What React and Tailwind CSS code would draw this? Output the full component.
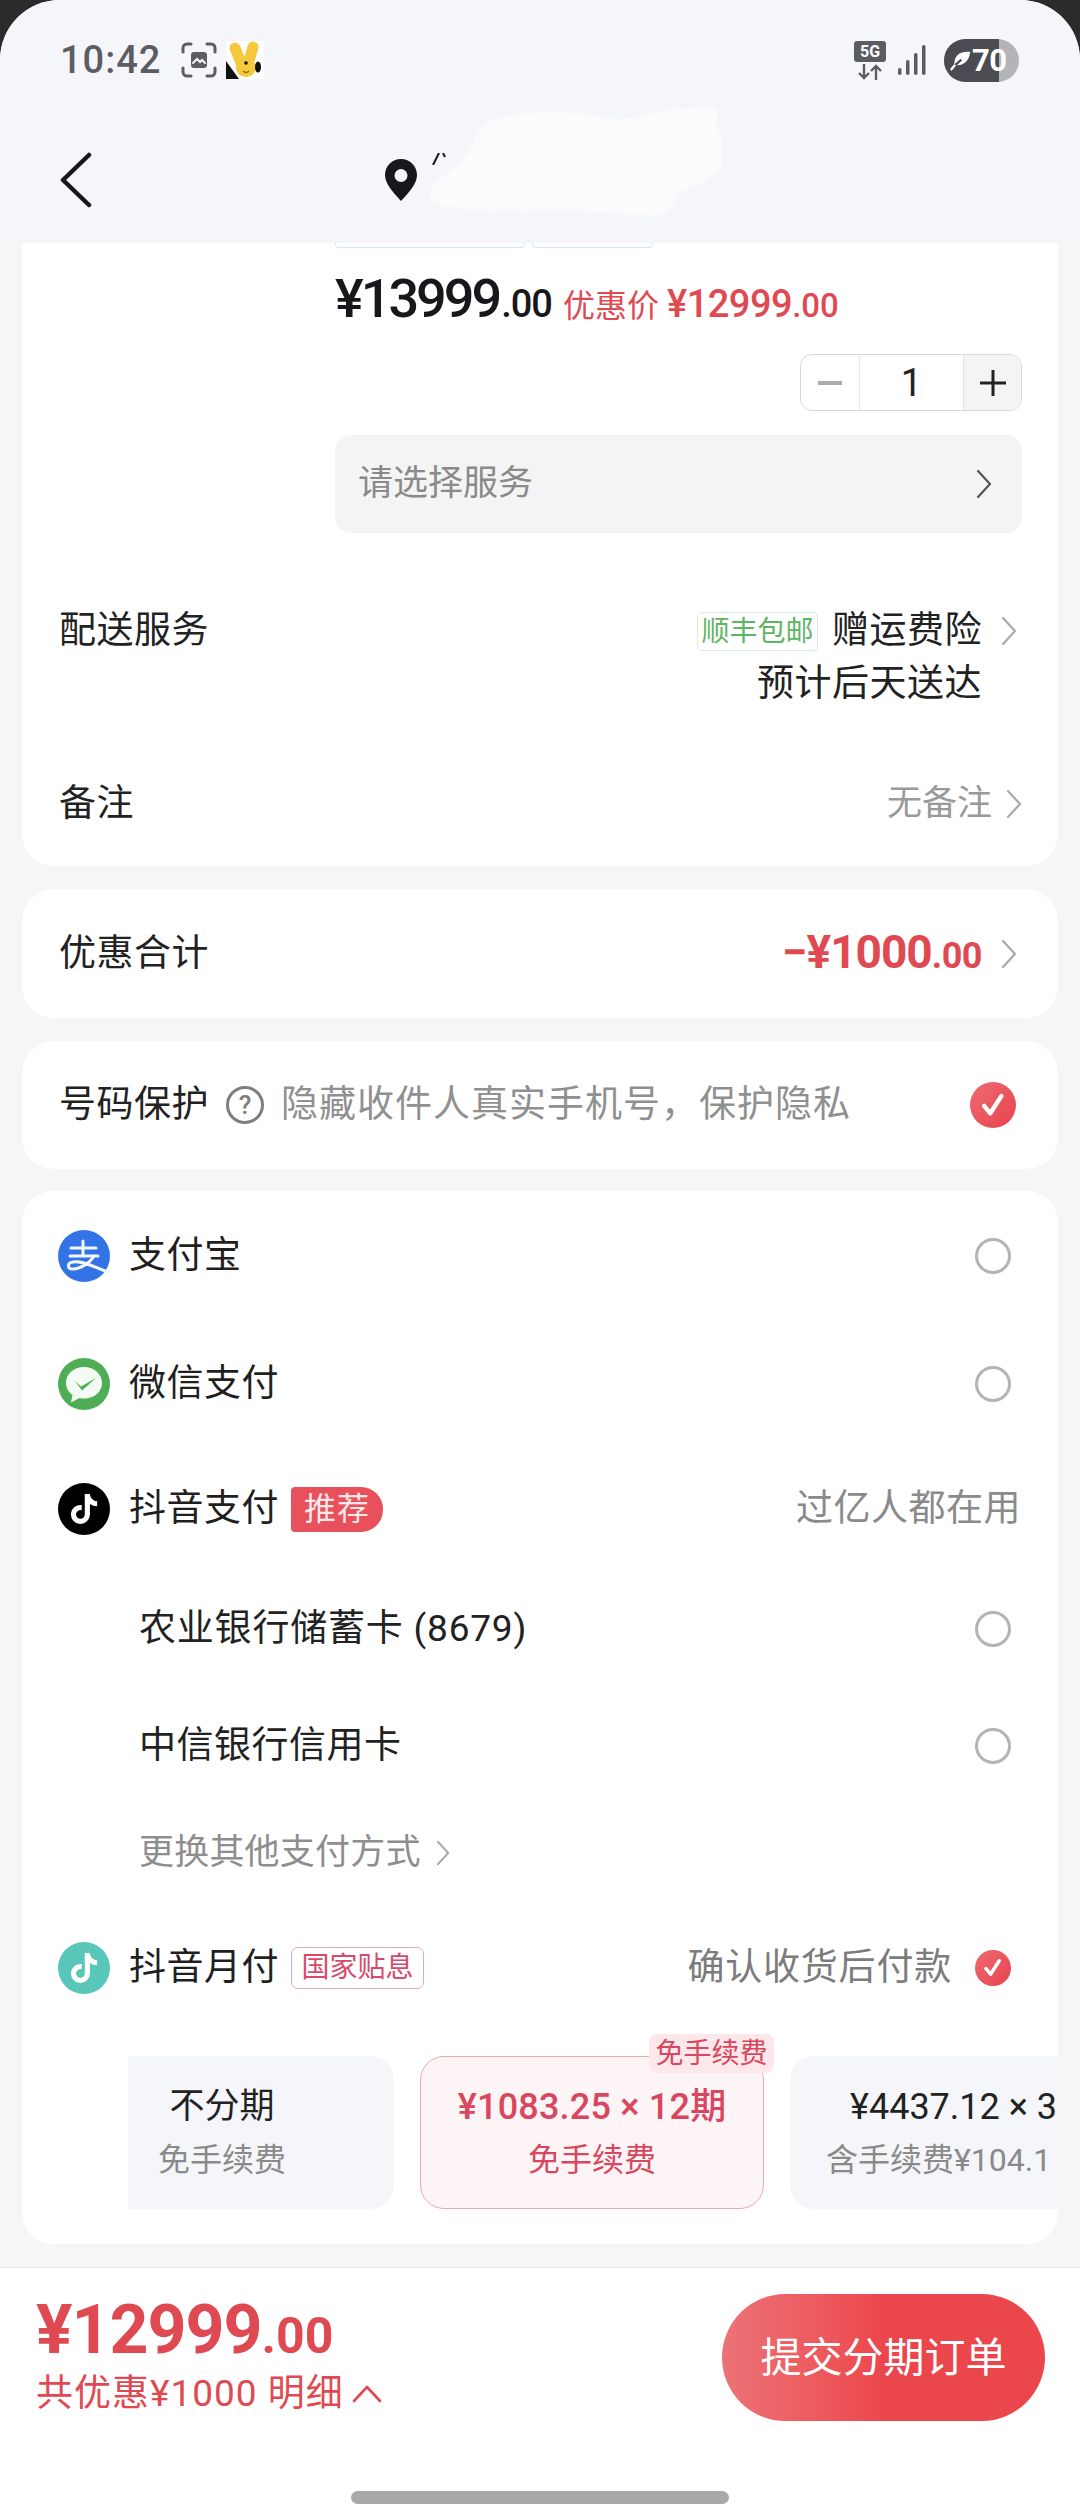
import React from "react";
import { FaTiktok } from "react-icons/fa";

function Chevron({ className = "" }) {
  return (
    <svg viewBox="0 0 16 30" className={`w-[16px] h-[30px] shrink-0 ${className}`} fill="none" stroke="currentColor" strokeWidth="2.2" strokeLinecap="round" strokeLinejoin="round">
      <path d="M2 2l12 13L2 28" />
    </svg>
  );
}

function Radio() {
  return <div className="w-[36px] h-[36px] rounded-full border-[3px] border-[#b4b4b4] shrink-0" />;
}

function Check({ size = "w-[36px] h-[36px]" }) {
  return (
    <div className={`${size} rounded-full bg-gradient-to-br from-[#ee6a70] to-[#e8404e] flex items-center justify-center shrink-0`}>
      <svg viewBox="0 0 24 24" className="w-[64%] h-[64%]" fill="none" stroke="#fff" strokeWidth="3.6" strokeLinecap="round" strokeLinejoin="round">
        <path d="M5 13l5 6 9-14" />
      </svg>
    </div>
  );
}

function AlipayIcon() {
  return (
    <svg viewBox="0 0 52 52" className="w-[52px] h-[52px] shrink-0">
      <circle cx="26" cy="26" r="26" fill="#3274e8" />
      <g fill="none" stroke="#f4f7ff" strokeWidth="3" strokeLinecap="round">
        <path d="M13 18h25M25 11v14M12 26h28" />
        <path d="M36 26C32 33 22 39 15 39 9 39 9 33 15 32c9-2 23 6 35 10" />
      </g>
    </svg>
  );
}

function WechatIcon() {
  return (
    <svg viewBox="0 0 52 52" className="w-[52px] h-[52px] shrink-0">
      <circle cx="26" cy="26" r="26" fill="#4fae55" />
      <path d="M26 9C15.500 9 8 16 8 25c0 5 2.600 9.200 6.500 12L13 44.500l8.500-4.500c1.500.4 3 .6 4.500.6 10.500 0 18-7 18-15.600S36.500 9 26 9z" fill="#f4fbf4" />
      <path d="M17 23l6 5.500L38 20 24 32.500z" fill="#4fae55" />
    </svg>
  );
}

function TiktokIcon({ bg }) {
  return (
    <div className={`w-[52px] h-[52px] rounded-full ${bg} flex items-center justify-center shrink-0 text-white text-[30px]`}>
      <FaTiktok />
    </div>
  );
}

function PayRow({ icon, label, children, className = "" }) {
  return (
    <div className={`flex items-center h-[52px] pl-[36px] ${className}`}>
      {icon}
      <span className="ml-[19px] text-[#1f1f1f] tracking-[0.5px]">{label}</span>
      {children}
    </div>
  );
}

function StatusBar() {
  return (
    <div className="flex items-center h-[120px] pl-[60px] pr-[61px] text-[#5b5d63]">
      <span className="text-[38px] font-medium leading-none tracking-[1px]">10:42</span>
      {/* screenshot indicator */}
      <svg viewBox="0 0 36 36" className="w-[36px] h-[36px] ml-[20px]" fill="none" stroke="#5b5d63" strokeWidth="3" strokeLinecap="round">
        <path d="M2 10V6a4 4 0 014-4h4M26 2h4a4 4 0 014 4v4M34 26v4a4 4 0 01-4 4h-4M10 34H6a4 4 0 01-4-4v-4" />
        <rect x="10" y="10" width="16" height="16" rx="3" fill="#5b5d63" stroke="none" />
        <path d="M12 21l4-4 3 3 2-2 3 3" stroke="#f5f6fa" strokeWidth="2" />
      </svg>
      {/* bunny app icon */}
      <svg viewBox="0 0 38 38" className="w-[38px] h-[38px] ml-[9px]">
        <rect width="38" height="38" fill="#fff" />
        <path d="M9 7l8 20M27 6l-6 21" fill="none" stroke="#f5c93c" strokeWidth="11" strokeLinecap="round" />
        <ellipse cx="20" cy="27" rx="10" ry="9" fill="#f5c93c" />
        <path d="M0 20l13 18H0z" fill="#111" />
        <ellipse cx="32" cy="26" rx="3" ry="5.500" fill="#111" />
        <circle cx="20" cy="22" r="1.800" fill="#111" />
        <path d="M17 30c2 2 4 2 6 0" fill="none" stroke="#8a6a10" strokeWidth="1.200" />
      </svg>
      <div className="flex-1" />
      {/* 5G */}
      <div className="flex flex-col items-center w-[32px] mr-[12px]">
        <div className="w-[32px] h-[21px] bg-[#5b5d63] rounded-[3px] text-white text-[16px] font-bold leading-[21px] text-center">5G</div>
        <svg viewBox="0 0 28 16" className="w-[28px] h-[16px] mt-[2px]" fill="none" stroke="#5b5d63" strokeWidth="2.400">
          <path d="M8 0v14M3 9l5 5 5-5M20 16V2M15 7l5-5 5 5" />
        </svg>
      </div>
      {/* signal */}
      <svg viewBox="0 0 28 30" className="w-[28px] h-[30px] mr-[18px]" fill="#5b5d63">
        <rect x="0" y="23" width="3.500" height="7" rx="1.700" />
        <rect x="8" y="15" width="3.500" height="15" rx="1.700" />
        <rect x="16" y="8" width="3.500" height="22" rx="1.700" />
        <rect x="24" y="0" width="3.500" height="30" rx="1.700" />
      </svg>
      {/* battery */}
      <div className="relative w-[75px] h-[43px] rounded-full overflow-hidden bg-[#b3b4b8] shrink-0">
        <div className="w-[55px] h-full bg-[#4b4c52] flex items-center pl-[6px]">
          <svg viewBox="0 0 24 24" className="w-[21px] h-[21px] shrink-0">
            <path d="M23 2C12 1 4 6 5 17c8 2 17-3 18-15z" fill="#fff" />
            <path d="M1 23c4-5 7-8 12-12" fill="none" stroke="#4b4c52" strokeWidth="2.500" />
            <path d="M1 23c2-3 3-4 5-6" fill="none" stroke="#fff" strokeWidth="2.500" />
          </svg>
          <span className="ml-[1px] text-white text-[31px] font-bold leading-none tracking-[-0.5px]">70</span>
        </div>
      </div>
    </div>
  );
}

function Header() {
  return (
    <div className="bg-[#f5f6fa] h-[243px] rounded-t-[60px] shrink-0">
      <StatusBar />
      <div className="relative flex items-center h-[90px] pl-[60px] mt-[15px]">
        <svg viewBox="0 0 32 56" className="w-[32px] h-[56px]" fill="none" stroke="#17181c" strokeWidth="4.500" strokeLinecap="round" strokeLinejoin="round">
          <path d="M29 3L3 28l26 25" />
        </svg>
        <svg viewBox="0 0 32 42" className="w-[32px] h-[42px] ml-[293px]">
          <path fillRule="evenodd" d="M16 0C7 0 0 7 0 16c0 9 8 17 16 26 8-9 16-17 16-26C32 7 25 0 16 0zm0 10a6.500 6.500 0 110 13 6.500 6.500 0 010-13z" fill="#17181c" />
        </svg>
        <div className="w-[250px] h-[3px] ml-[12px] relative">
          <svg viewBox="0 0 30 12" className="absolute left-[0px] top-[-26px] w-[30px] h-[12px]" fill="none" stroke="#17181c" strokeWidth="2">
            <path d="M4 12L10 0M14 0l2 4" />
          </svg>
          <div className="absolute left-[250px] top-[-2px] w-[22px] h-[4px] bg-[#17181c]" />
        </div>
        {/* smudge painted over the address */}
        <svg viewBox="0 0 300 113" className="absolute left-[427px] top-[-28px] w-[300px] h-[113px]">
          <path d="M3 85C8 70 40 60 48 31 55 12 80 7 110 6c40-1 60 2 80 7 30-5 70-15 99-13 3 8 1 15 0 20 11 15 11 40-4 50-15 10-30 12-35 18-3 12-8 20-23 20-50 0-80-8-117-5-25 2-50 2-88-3C5 98 1 92 3 85z" fill="#fbfbfc" />
        </svg>
      </div>
    </div>
  );
}

export default function App() {
  return (
    <div className="h-[2520px] w-[1080px] overflow-hidden bg-[#2b2b2b] font-['Roboto','Noto_Sans_CJK_SC',sans-serif] text-[37px] leading-[52px]">
      <div className="h-full rounded-t-[60px] bg-[#f6f6f6] flex flex-col">
        <Header />

        <div className="flex-1 px-[22px] flex flex-col">
          {/* order card */}
          <div className="bg-white rounded-b-[32px] h-[623px] shrink-0">
            <div className="pl-[313px] pr-[36px]">
              <div className="flex gap-[7px] h-[5px]">
                <div className="w-[190px] h-[5px] rounded-b-[4px] border border-t-0 border-[#d5e9e6]" />
                <div className="w-[121px] h-[5px] rounded-b-[4px] border border-t-0 border-[#d5e9e6]" />
              </div>
              <div className="flex items-baseline h-[70px] mt-[16px] leading-[70px] whitespace-nowrap">
                <span className="text-[54px] font-medium text-[#17181c] tracking-[-3px]">¥13999</span>
                <span className="text-[38px] font-medium text-[#17181c] tracking-[-1px] ml-[2px]">.00</span>
                <span className="text-[32px] text-[#df4a52] ml-[11px]">优惠价</span>
                <span className="text-[38px] font-medium text-[#df4a52] ml-[8px] tracking-[-0.5px]">¥12999</span>
                <span className="text-[33px] font-medium text-[#df4a52]">.00</span>
              </div>
              <div className="flex justify-end mt-[20px]">
                <div className="flex h-[57px] w-[222px] rounded-[12px] border border-[#d8d8d8] overflow-hidden">
                  <div className="w-[59px] flex items-center justify-center border-r border-[#e8e8e8]">
                    <div className="w-[24px] h-[4px] bg-[#ababab]" />
                  </div>
                  <div className="flex-1 flex items-center justify-center text-[38px] text-[#222]">1</div>
                  <div className="w-[58px] flex items-center justify-center border-l border-[#e2e2e2] bg-[#f4f4f4] text-[#222]">
                    <svg viewBox="0 0 26 26" className="w-[26px] h-[26px]" stroke="#222" strokeWidth="3"><path d="M13 0v26M0 13h26" /></svg>
                  </div>
                </div>
              </div>
              <div className="flex items-center h-[98px] mt-[24px] pl-[23px] pr-[30px] rounded-[16px] bg-[#f4f4f4]">
                <span className="flex-1 text-[35px] text-[#8a8a8a]">请选择服务</span>
                <Chevron className="text-[#555]" />
              </div>
            </div>

            <div className="flex justify-between pl-[37px] pr-[41px] mt-[72px] text-[#222]">
              <span className="tracking-[0.5px]">配送服务</span>
              <div className="flex flex-col items-end">
                <div className="flex items-center h-[52px]">
                  <span className="h-[39px] w-[121px] rounded-[5px] border border-[#d9ead9] text-[#5fb565] text-[28px] leading-[37px] text-center">顺丰包邮</span>
                  <span className="ml-[14px] tracking-[0.5px]">赠运费险</span>
                  <Chevron className="text-[#aaa] ml-[19px]" />
                </div>
                <span className="h-[53px] leading-[53px] mr-[35px] tracking-[0.5px]">预计后天送达</span>
              </div>
            </div>

            <div className="flex items-center pl-[37px] pr-[36px] mt-[68px] h-[52px] text-[#222]">
              <span className="flex-1 tracking-[0.5px]">备注</span>
              <span className="text-[35px] text-[#9a9a9a]">无备注</span>
              <Chevron className="text-[#aaa] ml-[14px]" />
            </div>
          </div>

          {/* discount total */}
          <div className="bg-white rounded-[32px] h-[129px] mt-[23px] flex items-center pl-[37px] pr-[41px] shrink-0">
            <span className="flex-1 text-[#222] tracking-[0.5px]">优惠合计</span>
            <div className="flex items-baseline text-[#df4a52] font-bold">
              <span className="text-[46px] tracking-[-1px]">−¥1000</span>
              <span className="text-[36px] tracking-[-0.5px]">.00</span>
            </div>
            <Chevron className="text-[#aaa] ml-[19px]" />
          </div>

          {/* phone number protection */}
          <div className="bg-white rounded-[32px] h-[128px] mt-[23px] flex items-center pl-[37px] pr-[42px] shrink-0">
            <span className="text-[#222] tracking-[0.5px]">号码保护</span>
            <div className="w-[38px] h-[38px] ml-[17px] rounded-full border-[3px] border-[#7f7f7f] text-[#7f7f7f] text-[26px] font-medium leading-[32px] text-center shrink-0">?</div>
            <span className="flex-1 ml-[17px] text-[#909090] tracking-[1px] whitespace-nowrap">隐藏收件人真实手机号，保护隐私</span>
            <Check size="w-[46px] h-[46px]" />
          </div>

          {/* payment methods */}
          <div className="bg-white rounded-[32px] h-[1053px] mt-[22px] shrink-0 overflow-hidden">
            <PayRow icon={<AlipayIcon />} label="支付宝" className="mt-[39px] pr-[47px] justify-between">
              <div className="flex-1" />
              <Radio />
            </PayRow>
            <PayRow icon={<WechatIcon />} label="微信支付" className="mt-[76px] pr-[47px]">
              <div className="flex-1" />
              <Radio />
            </PayRow>
            <PayRow icon={<TiktokIcon bg="bg-black" />} label="抖音支付" className="mt-[73px] pr-[37px]">
              <span className="ml-[12px] w-[92px] h-[45px] rounded-[4px_22px_22px_4px] bg-[#e8505c] text-[#fde9ea] text-[32px] leading-[45px] text-center tracking-[1px]">推荐</span>
              <div className="flex-1" />
              <span className="text-[#8a8a8a] tracking-[0.5px]">过亿人都在用</span>
            </PayRow>

            <div className="flex items-center h-[52px] mt-[68px] pl-[117px] pr-[47px] text-[#222]">
              <span className="flex-1 tracking-[0.8px]">农业银行储蓄卡 (8679)</span>
              <Radio />
            </div>
            <div className="flex items-center h-[52px] mt-[65px] pl-[117px] pr-[47px] text-[#222]">
              <span className="flex-1 tracking-[0.5px]">中信银行信用卡</span>
              <Radio />
            </div>
            <div className="flex items-center h-[52px] mt-[55px] pl-[117px] text-[35px] text-[#8e8e8e]">
              <span className="tracking-[0.2px]">更换其他支付方式</span>
              <Chevron className="text-[#aaa] ml-[15px] !w-[14px] !h-[26px]" />
            </div>

            <PayRow icon={<TiktokIcon bg="bg-[#58c6b8]" />} label="抖音月付" className="mt-[63px] pr-[47px]">
              <span className="ml-[12px] w-[133px] h-[42px] rounded-[7px] border border-[#e5a9b6] text-[#d9496a] text-[28px] leading-[40px] text-center">国家贴息</span>
              <div className="flex-1" />
              <span className="text-[#7c7c7c] mr-[23px] tracking-[0.8px]">确认收货后付款</span>
              <Check />
            </PayRow>

            {/* instalment options */}
            <div className="flex mt-[62px] pl-[106px] h-[153px]">
              <div className="w-[266px] h-full shrink-0 rounded-r-[24px] bg-[#f5f6fa] flex flex-col items-center pt-[25px] pr-[78px]">
                <span className="text-[35px] text-[#222] leading-[52px]">不分期</span>
                <span className="text-[32px] text-[#8a8a8a] leading-[54px]">免手续费</span>
              </div>
              <div className="relative w-[344px] h-full shrink-0 ml-[26px] rounded-[24px] border border-[#e9aab5] bg-[#fdf4f5] flex flex-col items-center pt-[24px] text-[#d9465f]">
                <span className="text-[36px] font-medium leading-[52px] whitespace-nowrap tracking-[0.2px]">¥1083.25 × 12期</span>
                <span className="text-[32px] leading-[54px]">免手续费</span>
                <span className="absolute right-[-11px] top-[-23px] w-[125px] h-[39px] rounded-[8px] bg-[#fce8eb] text-[28px] leading-[39px] text-center">免手续费</span>
              </div>
              <div className="w-[300px] h-full shrink-0 ml-[26px] rounded-l-[24px] bg-[#f5f6fa] flex flex-col pt-[25px] whitespace-nowrap">
                <span className="text-[36px] text-[#222] leading-[52px] ml-[60px]">¥4437.12 × 3</span>
                <span className="text-[32px] text-[#8a8a8a] leading-[54px] ml-[36px]">含手续费¥104.1</span>
              </div>
            </div>
          </div>
        </div>

        {/* bottom bar */}
        <div className="bg-white h-[253px] border-t border-[#e6e6e6] shrink-0 relative">
          <div className="flex justify-between pl-[36px] pr-[35px] pt-[26px]">
            <div className="text-[#df4a52]">
              <div className="flex items-baseline h-[72px] leading-[72px] font-bold">
                <span className="text-[68px] tracking-[-1px]">¥12999</span>
                <span className="text-[50px]">.00</span>
              </div>
              <div className="flex items-center mt-[2px] h-[52px]">
                <span className="tracking-[1px]">共优惠¥1000 明细</span>
                <svg viewBox="0 0 30 18" className="w-[30px] h-[18px] ml-[8px]" fill="none" stroke="#df4a52" strokeWidth="2.600" strokeLinecap="round" strokeLinejoin="round">
                  <path d="M2 16L15 2l13 14" />
                </svg>
              </div>
            </div>
            <div className="w-[323px] h-[127px] rounded-full bg-gradient-to-r from-[#ec7276] to-[#ec464d] to-50% flex items-center justify-center text-white text-[41px]">
              提交分期订单
            </div>
          </div>
          <div className="absolute left-[351px] bottom-[16px] w-[378px] h-[13px] rounded-full bg-[#a9a9a9]" />
        </div>
      </div>
    </div>
  );
}
